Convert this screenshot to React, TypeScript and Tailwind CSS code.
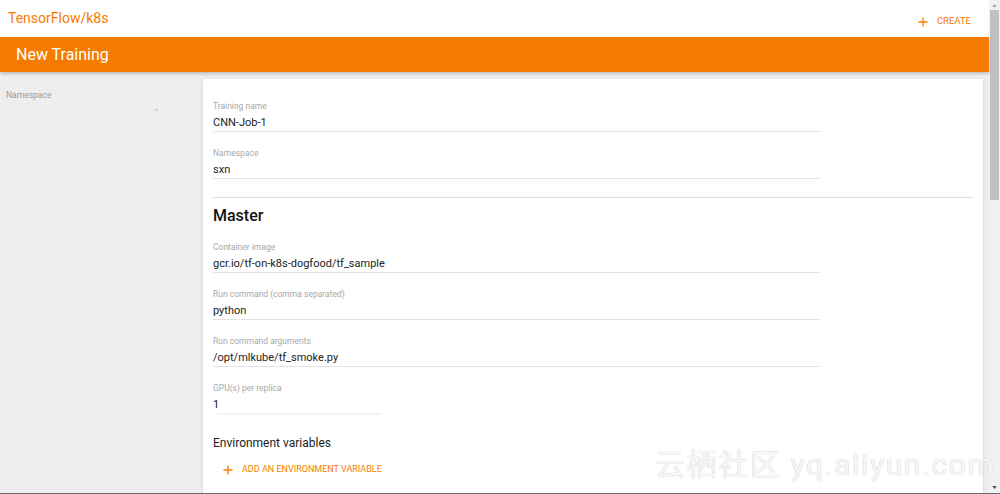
import React from "react";

const Field = ({ label, value }: { label: string; value: string }) => (
    <div className="w-[607px] border-b border-[#e3e3e3] pb-[1px]">
        <div className="text-[8.5px] leading-[10px] text-[#a8a8a8]">{label}</div>
        <div className="mt-[5px] text-[11px] leading-[14px] text-[#222]">{value}</div>
    </div>
);

const Plus = ({ className }: { className?: string }) => (
    <svg viewBox="0 0 10 10" className={className}>
        <path d="M5 0.5v9M0.5 5h9" stroke="currentColor" strokeWidth="1.3" fill="none" />
    </svg>
);

export default function App() {
    return (
        <div className="relative flex h-[494px] w-[1000px] flex-col overflow-hidden bg-[#eeeeee] font-['Roboto','Noto_Sans_CJK_SC',sans-serif]">
            <div className="flex h-[493px]">
                {/* page */}
                <div className="flex w-[989px] flex-col">
                    <div className="flex h-[37px] items-center justify-between bg-white pl-2 pr-[18px]">
                        <span className="text-[14px] text-[#f57c00]">TensorFlow/k8s</span>
                        <div className="mt-[6px] flex items-center gap-[9px] text-[#f57c00]">
                            <Plus className="h-[10px] w-[10px]" />
                            <span className="text-[9.5px]">CREATE</span>
                        </div>
                    </div>
                    <div className="z-10 flex h-[35px] items-center bg-[#f57c00] pl-4 text-[16px] text-white shadow-[0_2px_3px_rgba(0,0,0,0.2)]">
                        New Training
                    </div>
                    <div className="flex flex-1 overflow-hidden">
                        {/* sidebar */}
                        <div className="w-[203px] pl-[6px] pt-[18px]">
                            <div className="text-[8.5px] leading-[10px] text-[#9a9a9a]">Namespace</div>
                            <div className="ml-[9px] mt-[4px] flex h-[14px] w-[160px] items-center justify-end border-b border-[#ececec] pr-[16px]">
                                <svg viewBox="0 0 6 4" className="h-[3px] w-[5px]">
                                    <path d="M0 0h6L3 4z" fill="#cfcfcf" />
                                </svg>
                            </div>
                        </div>
                        {/* card */}
                        <div className="mt-[7px] w-[780px] bg-white px-[10px] pt-[22px] shadow-[0_1px_3px_rgba(0,0,0,0.15)]">
                            <Field label="Training name" value="CNN-Job-1" />
                            <div className="mt-4">
                                <Field label="Namespace" value="sxn" />
                            </div>
                            <div className="mt-[18px] border-t border-[#dedede]" />
                            <div className="mt-2 text-[16px] font-medium leading-[20px] text-[#111]">Master</div>
                            <div className="mt-4 flex flex-col gap-4">
                                <Field label="Container image" value="gcr.io/tf-on-k8s-dogfood/tf_sample" />
                                <Field label="Run command (comma separated)" value="python" />
                                <Field label="Run command arguments" value="/opt/mlkube/tf_smoke.py" />
                                <div>
                                    <div className="text-[8.5px] leading-[10px] text-[#a8a8a8]">GPU(s) per replica</div>
                                    <div className="mt-[5px] text-[11px] leading-[14px] text-[#222]">1</div>
                                    <div className="ml-[4px] mt-[1px] h-[2px] w-[164px] bg-[#f2f2f2]" />
                                </div>
                            </div>
                            <div className="mt-[20px] text-[12px] leading-[16px] text-[#222]">Environment variables</div>
                            <div className="ml-[10px] mt-[12px] flex items-center gap-[9px] text-[#f57c00]">
                                <Plus className="h-[10px] w-[10px]" />
                                <span className="text-[9px]">ADD AN ENVIRONMENT VARIABLE</span>
                            </div>
                        </div>
                    </div>
                </div>
                {/* scrollbar */}
                <div className="flex w-[11px] flex-col items-center bg-[#f1f1f1]">
                    <svg viewBox="0 0 6 4" className="mt-[4px] h-[3px] w-[5px]">
                        <path d="M3 0l3 4H0z" fill="#a3a3a3" />
                    </svg>
                    <div className="mt-[3px] h-[190px] w-[9px] bg-[#c1c1c1]" />
                    <div className="flex-1" />
                    <svg viewBox="0 0 6 4" className="mb-[4px] h-[3px] w-[5px]">
                        <path d="M0 0h6L3 4z" fill="#505050" />
                    </svg>
                </div>
            </div>
            <div className="h-[1px] bg-[#6f6f6f]" />
            {/* watermark */}
            <div className="pointer-events-none absolute left-[655px] top-[447px] text-[30px] leading-[36px] tracking-[1.6px] text-[#f7f7f7] [text-shadow:0_0_1px_#b5b5b5]">
                云栖社区 yq.aliyun.com
            </div>
        </div>
    );
}
